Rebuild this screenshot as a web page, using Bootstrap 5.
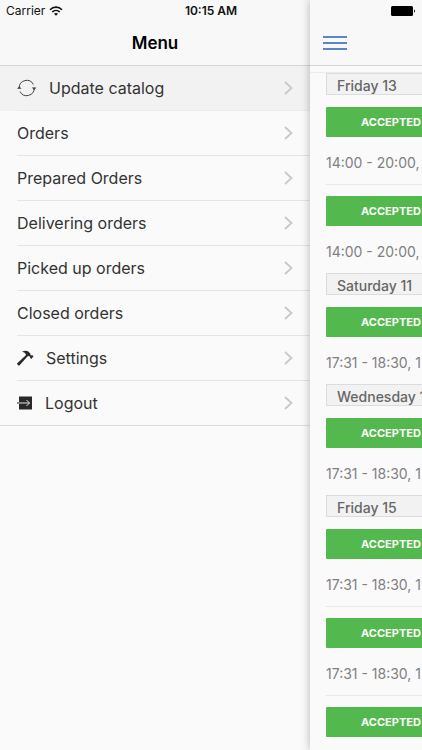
<!DOCTYPE html>
<html lang="en">
<head>
<meta charset="utf-8">
<meta name="viewport" content="width=device-width, initial-scale=1">
<title>Menu</title>
<link href="https://cdn.jsdelivr.net/npm/bootstrap@5.3.0/dist/css/bootstrap.min.css" rel="stylesheet">
<style>
body { font-family: Inter, "Liberation Sans", sans-serif; background: #fafafa; color: #333; }
.status { font-size: 12px; line-height: 22px; color: #111; padding: 0 6px; z-index: 3; }
.side { width: 310px; }
.bar { height: 66px; padding-top: 21px; background: #f8f8f8; border-bottom: 1px solid #d5d5d8; }
.bar h1 { font-size: 17px; line-height: 44px; color: #000; }
.entry { height: 45px; padding-left: 17px; color: #333; font-size: 16px; line-height: 44px; }
.entry .line { border-bottom: 1px solid #e4e4e8; padding-right: 17px; }
.entry .glyph { flex-shrink: 0; margin-right: 12px; }
.entry.current { background: #f2f2f2; }
.entry.current .line { border-bottom-color: #ebebed; }
.entry:last-child { border-bottom: 1px solid #dedee2; }
.entry:last-child .line { border-bottom: 0; }
.main-view { background: #fafafa; box-shadow: 0 0 9px rgba(0,0,0,.28); z-index: 2; }
.lead-line { height: 7px; border-bottom: 1px solid #ebebed; }
.orders { padding-left: 16px; }
.day { height: 22px; padding-left: 10px; border: 1px solid #dcdce0; border-right: 0; background: #f2f2f2; color: #666; font-size: 14px; line-height: 23px; }
.slot { height: 89px; padding-top: 11px; border-top: 1px solid #e9e9eb; }
.day + .slot { border-top-color: transparent; }
.state { width: 130px; height: 30px; background: #53b94e; color: #fff; font-size: 11px; line-height: 29px; border-radius: 1px; }
.when { padding-top: 14px; font-size: 14px; line-height: 24px; color: #808080; }
</style>
<script src="https://cdn.jsdelivr.net/npm/bootstrap@5.3.0/dist/js/bootstrap.bundle.min.js"></script>
</head>
<body class="overflow-hidden">
<svg class="d-none" aria-hidden="true"><symbol id="chevron" viewBox="0 0 9 14"><path d="m1 1 6.5 6L1 13" fill="none" stroke="#c7c7cc" stroke-width="1.8"/></symbol></svg>
<div class="d-flex vh-100 position-relative overflow-hidden">
  <div class="status position-absolute top-0 start-0 w-100 row g-0 align-items-center">
    <div class="col d-flex align-items-center gap-1">Carrier
      <svg width="14" height="10" viewBox="0 0 14 10" fill="none" stroke="#111" stroke-width="1.6" aria-hidden="true"><path d="M1 3.7C4.4.2 9.6.2 13 3.7M3.2 6c2.2-2.1 5.4-2.1 7.6 0"/><path d="M5 7.8c1.2-1 2.8-1 4 0L7 9.8Z" fill="#111" stroke="none"/></svg>
    </div>
    <div class="col-auto fw-semibold">10:15 AM</div>
    <div class="col d-flex justify-content-end">
      <svg width="25" height="10" viewBox="0 0 25 10" aria-hidden="true"><rect width="22" height="10" rx="1.5"/><path d="M23 3.2q2 1.8 0 3.6Z"/></svg>
    </div>
  </div>
  <aside class="side flex-shrink-0">
    <header class="bar text-center"><h1 class="fw-semibold mb-0">Menu</h1></header>
    <nav class="d-flex flex-column">
      <a href="#" class="entry current text-decoration-none" aria-current="page"><span class="line d-flex align-items-center">
        <svg class="glyph" width="20" height="18" viewBox="0 0 20 18" fill="none" stroke="#444" aria-hidden="true"><path d="M2.2 9.5V9a7.5 7.5 0 0 1 14.2-3.5M17.2 8.5V9A7.5 7.5 0 0 1 3 12.5"/><path d="M0 9.7 2.3 7.3l2.3 2.4ZM14.8 8.5h4.6L17.1 11Z" fill="#444" stroke="none"/></svg>
        <span class="flex-fill">Update catalog</span><svg width="9" height="14" aria-hidden="true"><use href="#chevron"/></svg></span></a>
      <a href="#" class="entry text-decoration-none"><span class="line d-flex align-items-center"><span class="flex-fill">Orders</span><svg width="9" height="14" aria-hidden="true"><use href="#chevron"/></svg></span></a>
      <a href="#" class="entry text-decoration-none"><span class="line d-flex align-items-center"><span class="flex-fill">Prepared Orders</span><svg width="9" height="14" aria-hidden="true"><use href="#chevron"/></svg></span></a>
      <a href="#" class="entry text-decoration-none"><span class="line d-flex align-items-center"><span class="flex-fill">Delivering orders</span><svg width="9" height="14" aria-hidden="true"><use href="#chevron"/></svg></span></a>
      <a href="#" class="entry text-decoration-none"><span class="line d-flex align-items-center"><span class="flex-fill">Picked up orders</span><svg width="9" height="14" aria-hidden="true"><use href="#chevron"/></svg></span></a>
      <a href="#" class="entry text-decoration-none"><span class="line d-flex align-items-center"><span class="flex-fill">Closed orders</span><svg width="9" height="14" aria-hidden="true"><use href="#chevron"/></svg></span></a>
      <a href="#" class="entry text-decoration-none"><span class="line d-flex align-items-center">
        <svg class="glyph" width="17" height="16" viewBox="0 0 17 16" aria-hidden="true"><path d="M0 13.4 8.6 5.6 9 4.2Q7.6 1.9 5 1.8 8 .2 11 1.2l2.3 2.2v1.4l1.2.8.9-.4 1.1 1.1-2.2 2.6-1.2-1 .1-1.1-1.4-.8-1.4.6L2.6 15.2 1 15.4Z" fill="#292929"/></svg>
        <span class="flex-fill">Settings</span><svg width="9" height="14" aria-hidden="true"><use href="#chevron"/></svg></span></a>
      <a href="#" class="entry text-decoration-none"><span class="line d-flex align-items-center">
        <svg class="glyph" width="16" height="14" viewBox="0 0 16 14" aria-hidden="true"><path d="M2 .5h13v13H2Z" fill="#292929"/><path d="M0 7h2" stroke="#292929"/><path d="M2 7h10.5M9.5 4l3 3-3 3" fill="none" stroke="#e4e4e4"/></svg>
        <span class="flex-fill">Logout</span><svg width="9" height="14" aria-hidden="true"><use href="#chevron"/></svg></span></a>
    </nav>
  </aside>
  <main class="main-view flex-fill overflow-hidden text-nowrap">
    <header class="bar d-flex align-items-center">
      <button class="btn border-0 p-0 ms-2 ps-1" aria-label="Toggle menu"><svg class="d-block" width="26" height="16" viewBox="0 0 26 16" stroke="#5a86c4" stroke-width="2" aria-hidden="true"><path d="M1 2h24M1 8h24M1 14h24"/></svg></button>
    </header>
    <div class="lead-line"></div>
    <div class="orders">
      <div class="day fw-medium">Friday 13</div>
      <div class="slot"><button class="state btn border-0 p-0 d-block fw-bold">ACCEPTED</button><div class="when">14:00 - 20:00,</div></div>
      <div class="slot"><button class="state btn border-0 p-0 d-block fw-bold">ACCEPTED</button><div class="when">14:00 - 20:00,</div></div>
      <div class="day fw-medium">Saturday 11</div>
      <div class="slot"><button class="state btn border-0 p-0 d-block fw-bold">ACCEPTED</button><div class="when">17:31 - 18:30, 1</div></div>
      <div class="day fw-medium">Wednesday 1</div>
      <div class="slot"><button class="state btn border-0 p-0 d-block fw-bold">ACCEPTED</button><div class="when">17:31 - 18:30, 1</div></div>
      <div class="day fw-medium">Friday 15</div>
      <div class="slot"><button class="state btn border-0 p-0 d-block fw-bold">ACCEPTED</button><div class="when">17:31 - 18:30, 1</div></div>
      <div class="slot"><button class="state btn border-0 p-0 d-block fw-bold">ACCEPTED</button><div class="when">17:31 - 18:30, 1</div></div>
      <div class="slot"><button class="state btn border-0 p-0 d-block fw-bold">ACCEPTED</button></div>
    </div>
  </main>
</div>
</body>
</html>
